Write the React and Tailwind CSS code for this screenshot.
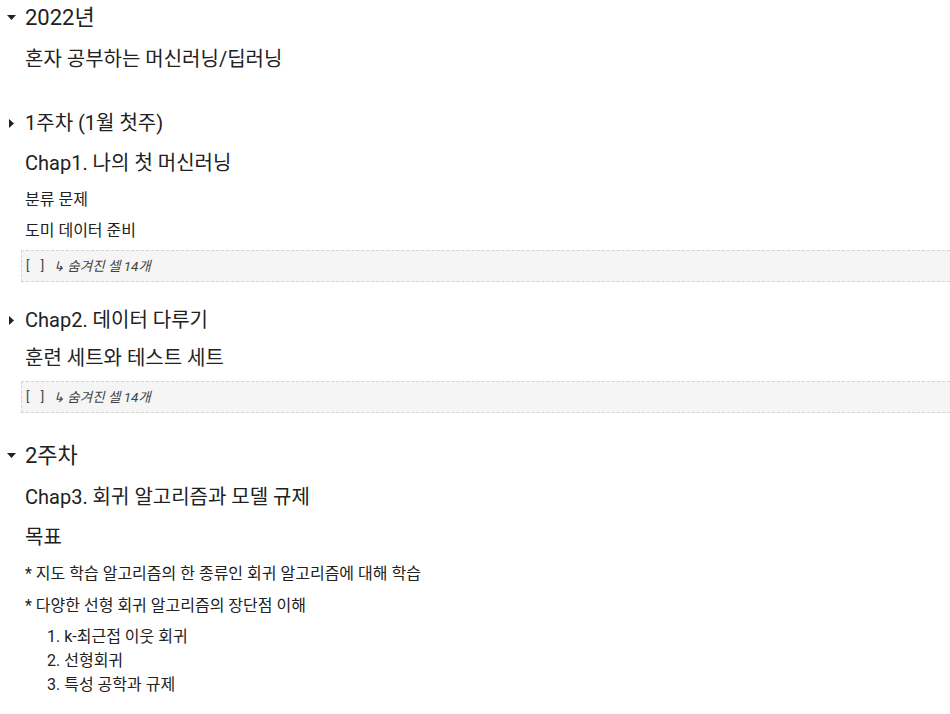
import React from "react";

const font = { fontFamily: 'Roboto, "Noto Sans CJK KR", sans-serif' };

const CaretDown = () => (
  <svg className="w-[9px] h-[5px]" viewBox="0 0 9 5">
    <path d="M0 0h9L4.5 5z" fill="#212121" />
  </svg>
);

const CaretRight = () => (
  <svg className="w-[5px] h-[9px]" viewBox="0 0 5 9">
    <path d="M0 0v9l5-4.5z" fill="#212121" />
  </svg>
);

const Section = ({ open, className, children }) => (
  <div className={`flex items-center ${className}`}>
    <div className="w-[25px] flex items-center pl-[6px]">
      <div className="w-[10px] flex justify-center">
        {open ? <CaretDown /> : <CaretRight />}
      </div>
    </div>
    <span>{children}</span>
  </div>
);

const Line = ({ className, children }) => (
  <div className={`flex items-center pl-[25px] ${className}`}>{children}</div>
);

const HiddenCells = ({ className }) => (
  <div
    className={`ml-[21px] h-[32px] flex items-center border border-dashed border-[#d4d4d4] border-r-0 bg-[#f5f5f5] text-[13.5px] text-[#424242] ${className}`}
  >
    <span className="pl-[4px] w-[31px] tracking-[4px] text-[13px]">[ ]</span>
    <span className="italic">↳ 숨겨진 셀 14개</span>
  </div>
);

export default function App() {
  return (
    <div className="w-[950px] h-[714px] bg-white text-[#212121] overflow-hidden" style={font}>
      <Section open className="h-[34px] text-[22px]">2022년</Section>
      <Line className="mt-[8px] h-[34px] text-[20px]">혼자 공부하는 머신러닝/딥러닝</Line>

      <Section className="mt-[30px] h-[34px] text-[20px]">1주차 (1월 첫주)</Section>
      <Line className="mt-[6px] h-[34px] text-[20px]">Chap1. 나의 첫 머신러닝</Line>
      <Line className="mt-[8px] h-[24px] text-[16px]">분류 문제</Line>
      <Line className="mt-[7px] h-[24px] text-[16px]">도미 데이터 준비</Line>
      <HiddenCells className="mt-[7px]" />

      <Section className="mt-[21px] h-[34px] text-[20px]">Chap2. 데이터 다루기</Section>
      <Line className="mt-[4px] h-[34px] text-[20px]">훈련 세트와 테스트 세트</Line>
      <HiddenCells className="mt-[6px]" />

      <Section open className="mt-[25px] h-[34px] text-[22px]">2주차</Section>
      <Line className="mt-[8px] h-[34px] text-[20px]">Chap3. 회귀 알고리즘과 모델 규제</Line>
      <Line className="mt-[6px] h-[34px] text-[20px]">목표</Line>
      <Line className="mt-[8px] h-[24px] text-[16px]">* 지도 학습 알고리즘의 한 종류인 회귀 알고리즘에 대해 학습</Line>
      <Line className="mt-[8px] h-[24px] text-[16px]">* 다양한 선형 회귀 알고리즘의 장단점 이해</Line>
      <ol className="mt-[7px] pl-[47px] text-[16px] list-decimal list-inside">
        <li className="h-[24px] leading-[24px]">k-최근접 이웃 회귀</li>
        <li className="h-[24px] leading-[24px]">선형회귀</li>
        <li className="h-[24px] leading-[24px]">특성 공학과 규제</li>
      </ol>
    </div>
  );
}
